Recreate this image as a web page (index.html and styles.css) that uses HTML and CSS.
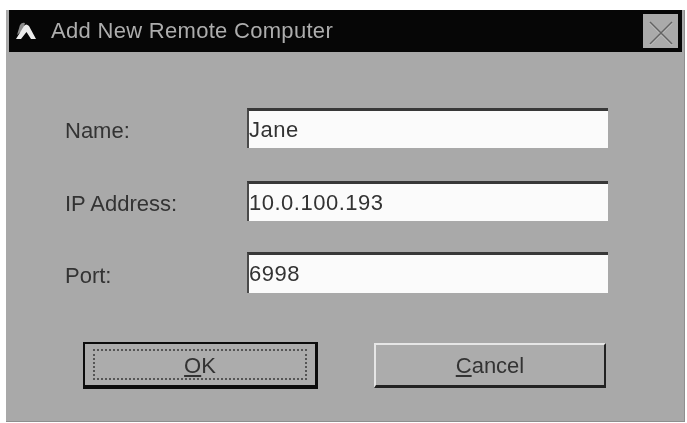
FILE: index.html
```html
<!DOCTYPE html>
<html lang="en">
<head>
    <meta charset="UTF-8">
    <title>Add New Remote Computer</title>
    <link rel="stylesheet" href="styles.css">
</head>
<body>
    <div class="dialog">
        <div class="titlebar">
            <svg class="app-icon" width="22" height="20" viewBox="0 0 22 20">
                <path d="M2 14 L5 4 Q7 1 10 2 L8 9 Z" fill="#8c8c8c"/>
                <path d="M1 18 L9 5 Q11 2 14 5 L21 18 L16 18 L11.5 11 L6 18 Z" fill="#ececec"/>
            </svg>
            <span class="title">Add New Remote Computer</span>
            <div class="close">
                <svg width="35" height="34" viewBox="0 0 35 34">
                    <path d="M7 9 L29 31 M29 9 L7 31" stroke="#c8c8c8" stroke-width="1.4" fill="none"/>
                    <path d="M7 8 L29 30 M29 8 L7 30" stroke="#636363" stroke-width="1.5" fill="none"/>
                </svg>
            </div>
        </div>

        <div class="form">
            <label class="row">
                <span class="label">Name:</span>
                <span class="field">Jane</span>
            </label>
            <label class="row">
                <span class="label">IP Address:</span>
                <span class="field">10.0.100.193</span>
            </label>
            <label class="row">
                <span class="label">Port:</span>
                <span class="field">6998</span>
            </label>
        </div>

        <div class="actions">
            <div class="button default"><span class="focus"><span><span class="u">O</span>K</span></span></div>
            <div class="button cancel"><span><span class="u">C</span>ancel</span></div>
        </div>
    </div>
</body>
</html>
```

FILE: styles.css
```css
html, body {
    margin: 0;
    padding: 0;
    height: 100%;
    background: #ffffff;
    overflow: hidden;
}

body {
    font-family: "Liberation Sans", Arial, sans-serif;
    color: #333333;
    padding: 10px 2px 0 6px;
    box-sizing: border-box;
}

.dialog {
    height: 412px;
    background: #a9a9a9;
    border-right: 1px solid #8f8f8f;
    border-bottom: 1px solid #8f8f8f;
    box-sizing: border-box;
    filter: blur(0.5px);
}

.titlebar {
    display: flex;
    align-items: center;
    height: 42px;
    margin: 0 2px 0 3px;
    background: #060606;
    padding: 0 4px 0 6px;
    box-sizing: border-box;
}

.app-icon {
    margin-right: 14px;
}

.title {
    flex: 1;
    font-size: 22px;
    letter-spacing: 0.3px;
    color: #adadad;
}

.close {
    display: flex;
    width: 35px;
    height: 34px;
    background: #aaaaaa;
}

.form {
    display: flex;
    flex-direction: column;
    gap: 33px;
    padding: 56px 0 0 59px;
}

.row {
    display: flex;
    align-items: center;
    height: 40px;
}

.row:last-child {
    margin-top: -2px;
    height: 41px;
}

.label {
    width: 182px;
    padding-top: 6px;
    font-size: 22px;
}

.field {
    width: 361px;
    height: 100%;
    line-height: 38px;
    background: #fbfbfb;
    border-top: 3px solid #383838;
    border-left: 2px solid #4a4a4a;
    box-sizing: border-box;
    font-size: 22px;
    letter-spacing: 0.5px;
}

.actions {
    display: flex;
    gap: 56px;
    align-items: center;
    padding: 49px 0 0 77px;
}

.button {
    display: flex;
    align-items: center;
    justify-content: center;
    box-sizing: border-box;
    background: #acacac;
    font-size: 22px;
}

.button.default {
    width: 235px;
    height: 47px;
    padding: 5px 8px;
    border: 2px solid #0c0c0c;
    border-right-width: 3px;
    border-bottom-width: 4px;
}

.focus {
    flex: 1;
    height: 100%;
    display: flex;
    align-items: center;
    justify-content: center;
    padding-top: 2px;
    border: 2px dotted #555555;
    box-sizing: border-box;
}

.button.cancel {
    width: 232px;
    height: 45px;
    padding-top: 2px;
    border-top: 2px solid #e6e6e6;
    border-left: 2px solid #e6e6e6;
    border-right: 2px solid #222222;
    border-bottom: 3px solid #222222;
}

.u {
    text-decoration: underline;
    text-underline-offset: 2px;
}
```
